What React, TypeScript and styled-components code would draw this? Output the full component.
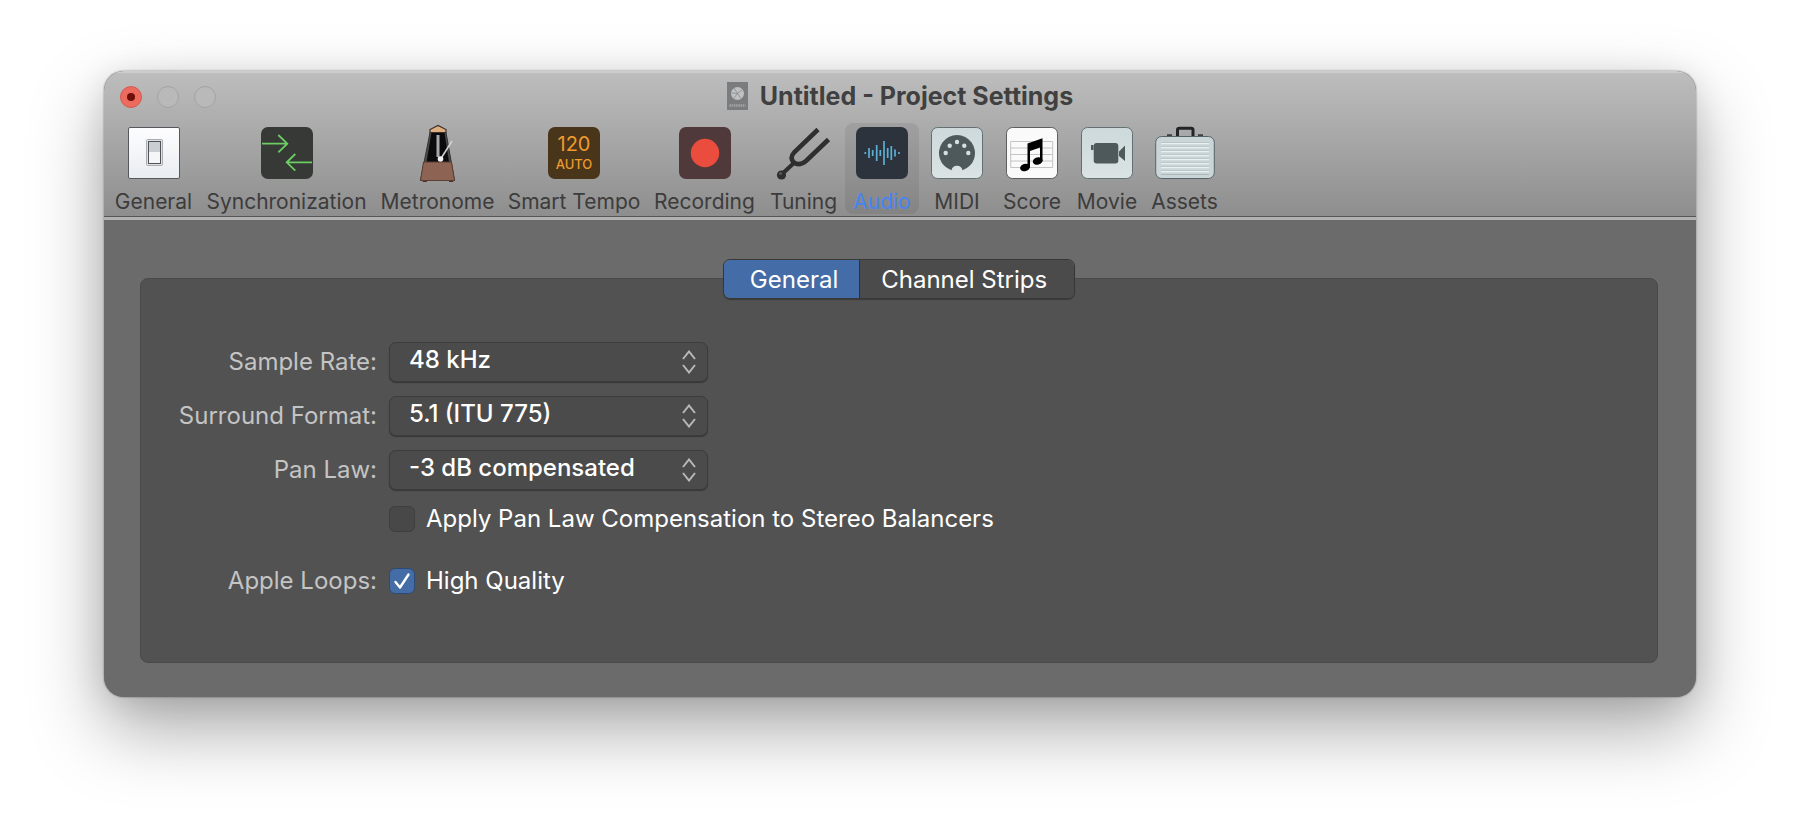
import React, { useState } from "react";
import styled, { createGlobalStyle } from "styled-components";

const GlobalStyle = createGlobalStyle`
  * { box-sizing: border-box; }
  body {
    margin: 0;
    background: #fff;
    font-family: Inter, "Liberation Sans", sans-serif;
  }
  button, select, input { font: inherit; color: inherit; margin: 0; }
`;

const Page = styled.main`
  padding: 71px 104px 138px;
`;

const Window = styled.section`
  border-radius: 20px;
  background: #6b6b6b;
  overflow: hidden;
  box-shadow: 0 0 2px rgba(0, 0, 0, 0.5), 0 32px 72px rgba(0, 0, 0, 0.34), 0 4px 32px rgba(0, 0, 0, 0.1);
`;

const Header = styled.header`
  background: linear-gradient(#bdbdbd, #8e8e8e);
  border-top: 2px solid #cdcdcd;
  border-bottom: 1px solid #565656;
`;

const TitleBar = styled.div`
  display: grid;
  grid-template-columns: 1fr auto 1fr;
  align-items: center;
  height: 48px;
  padding: 0 16px;
`;

const Lights = styled.div`
  display: flex;
  gap: 15px;
`;

const Light = styled.button<{ $close?: boolean }>`
  display: grid;
  place-items: center;
  width: 22px;
  height: 22px;
  padding: 0;
  border-radius: 50%;
  border: 1px solid ${(p) => (p.$close ? "#d8594f" : "#a3a3a3")};
  background: ${(p) => (p.$close ? "#ec6a5e" : "#b9b9b9")};
  &::after {
    content: "";
    width: 8px;
    height: 8px;
    border-radius: 50%;
    background: ${(p) => (p.$close ? "#6e0f08" : "transparent")};
  }
`;

const Title = styled.h1`
  display: flex;
  align-items: center;
  gap: 12px;
  margin: 0;
  padding-bottom: 2px;
  font-size: 25px;
  line-height: 32px;
  font-weight: 700;
  color: #404040;
`;

const Toolbar = styled.nav`
  display: flex;
  gap: 1px;
  padding: 2px 4px;
`;

const ToolButton = styled.button<{ $active?: boolean; $width: number }>`
  display: flex;
  flex: 0 0 ${(p) => p.$width}px;
  flex-direction: column;
  align-items: center;
  gap: 7px;
  padding: 0;
  border: 0;
  border-radius: 8px;
  background: ${(p) => (p.$active ? "rgba(0, 0, 0, 0.07)" : "transparent")};
  color: ${(p) => (p.$active ? "#4585f5" : "#3c3c3c")};
  font-size: 21px;
  line-height: 24px;
  white-space: nowrap;
  svg { display: block; }
`;

const Body = styled.div`
  border-top: 3px solid #b2b2b2;
  padding: 39px 38px 34px 36px;
`;

const Tabs = styled.div`
  position: relative;
  display: flex;
  width: max-content;
  margin: 0 auto -21px;
  border: 1px solid #383838;
  border-radius: 7px;
  overflow: hidden;
  box-shadow: 0 1px 1px rgba(0, 0, 0, 0.3);
`;

const Tab = styled.button<{ $active: boolean }>`
  height: 38px;
  padding: 0 21px;
  border: 0;
  background: ${(p) => (p.$active ? "#446ca6" : "#4b4b4b")};
  color: #fff;
  font-size: 24px;
  &:first-child { padding-left: 26px; }
  &:last-child { padding-right: 27px; }
  & + & { border-left: 1px solid #303030; }
`;

const Panel = styled.div`
  display: flex;
  flex-direction: column;
  padding: 63px 37px 70px;
  border: 1px solid #4a4a4a;
  border-radius: 8px;
  background: #525252;
`;

const Row = styled.div<{ $height: number; $gap: number }>`
  display: grid;
  grid-template-columns: 199px 1fr;
  column-gap: 12px;
  align-items: center;
  height: ${(p) => p.$height}px;
  margin-bottom: ${(p) => p.$gap}px;
`;

const Caption = styled.label`
  justify-self: end;
  color: #c4c4c4;
  font-size: 24px;
  line-height: 30px;
  white-space: nowrap;
`;

const SelectBox = styled.div`
  display: grid;
  width: 319px;
  align-items: center;
  & > * { grid-area: 1 / 1; }
  svg { justify-self: end; margin-right: 12px; pointer-events: none; }
`;

const Select = styled.select`
  appearance: none;
  width: 100%;
  height: 40px;
  padding: 0 40px 6px 19px;
  border: 1px solid #3c3c3c;
  border-radius: 7px;
  background: #4b4b4b;
  box-shadow: 0 1px 1px rgba(0, 0, 0, 0.35);
  color: #fff;
  font-size: 24px;
  font-weight: 500;
`;

const CheckLabel = styled.label`
  grid-column: 2;
  display: flex;
  align-items: center;
  gap: 11px;
  color: #fff;
  font-size: 24px;
  line-height: 30px;
`;

const CheckBox = styled.span`
  display: grid;
  width: 26px;
  height: 26px;
  & > * { grid-area: 1 / 1; }
  svg { pointer-events: none; }
`;

const CheckInput = styled.input`
  appearance: none;
  width: 26px;
  height: 26px;
  border: 1px solid #3e3e3e;
  border-radius: 6px;
  background: #484848;
  &:checked {
    background: #446ca6;
    border-color: #2f4a75;
  }
`;

const Icon = ({ children }: { children: React.ReactNode }) => (
  <svg width="60" height="60" viewBox="0 0 60 60" aria-hidden="true">
    {children}
  </svg>
);

const SwitchIcon = () => (
  <Icon>
    <defs>
      <linearGradient id="plate" x1="0" y1="0" x2="0" y2="1">
        <stop offset="0" stopColor="#fdfdfe" />
        <stop offset="1" stopColor="#e9edf1" />
      </linearGradient>
    </defs>
    <rect x="4.5" y="4.5" width="51" height="51" rx="1.5" fill="url(#plate)" stroke="#55585c" />
    <rect x="22.5" y="16.5" width="16" height="26" rx="1" fill="#dfe2e5" stroke="#a9adb1" />
    <rect x="24.5" y="18.5" width="12" height="22" fill="#f4f6f8" stroke="#4f5357" />
    <rect x="25" y="19" width="11" height="10" fill="#c9ced3" />
  </Icon>
);

const SyncIcon = () => (
  <Icon>
    <rect x="4" y="4" width="52" height="52" rx="7" fill="#363936" />
    <path
      d="M5 20.7H30M21.3 12L30.3 20.7L21.3 29.3M55 39.3H30M38.3 31L29.7 39.3L38.3 47.6"
      fill="none"
      stroke="#6bcd62"
      strokeWidth="1.8"
    />
  </Icon>
);

const MetronomeIcon = () => (
  <Icon>
    <path d="M14 57h5v2h-4zM41 57h5l-1 2h-4z" fill="#4b302a" />
    <path d="M22 9.5H38L46.5 57.5H12.5Z" fill="#4b4b4d" stroke="#333" />
    <path d="M23.5 9.5H36.5L41 39H18.5Z" fill="#0b0b0d" />
    <path d="M15.5 39H43.5L46.5 57.5H12.5Z" fill="#8d6353" stroke="#5a3d33" />
    <path d="M22 9.5V6.5L30 2.5L38 6.5V9.5Z" fill="#dcae80" stroke="#3a302a" strokeWidth="1.2" />
    <path d="M30 12V34" stroke="#a9a9a9" strokeWidth="3" />
    <path d="M32 37L44 18" stroke="#d4d4d4" strokeWidth="1.5" />
    <circle cx="32.5" cy="36" r="2.8" fill="#f0f0f0" />
  </Icon>
);

const TempoIcon = () => (
  <Icon>
    <rect x="4" y="4" width="52" height="52" rx="7" fill="#48351a" />
    <text x="30" y="28" textAnchor="middle" fontSize="20" fill="#ef9a2e">120</text>
    <text x="30" y="46" textAnchor="middle" fontSize="13" fontWeight="500" fill="#ef9a2e">AUTO</text>
  </Icon>
);

const RecordIcon = () => (
  <Icon>
    <rect x="4" y="4" width="52" height="52" rx="7" fill="#4f393b" />
    <circle cx="30" cy="30" r="14.2" fill="#ea4d3d" />
  </Icon>
);

const ForkIcon = () => (
  <Icon>
    <path d="M21 39L7 52" stroke="#2f2f30" strokeWidth="4" />
    <path
      d="M44 6.5L20.5 29Q15 35 20 39.5Q25 43.5 32 38L54.5 16.5"
      fill="none"
      stroke="#2f2f30"
      strokeWidth="4.6"
    />
    <circle cx="7.5" cy="52" r="4.6" fill="#2f2f30" />
    <circle cx="6.5" cy="50.5" r="1.5" fill="#5a5a5b" />
  </Icon>
);

const waveBars: [number, number][] = [
  [13.3, 1], [17, 5], [20.7, 3], [24.7, 8], [28.3, 3],
  [32, 12], [35.7, 5], [39.3, 7], [43, 3.5], [47, 1],
];

const WaveIcon = () => (
  <Icon>
    <rect x="4" y="4" width="52" height="52" rx="7" fill="#2c333d" />
    {waveBars.map(([x, half]) => (
      <path key={x} d={`M${x} ${30 - half}V${30 + half}`} stroke="#5cb0d4" strokeWidth="1.7" />
    ))}
  </Icon>
);

const Plate = () => (
  <>
    <defs>
      <linearGradient id="pale" x1="0" y1="0" x2="0" y2="1">
        <stop offset="0" stopColor="#cdd9db" />
        <stop offset="1" stopColor="#dbe3e4" />
      </linearGradient>
    </defs>
    <rect x="4.5" y="4.5" width="51" height="51" rx="6" fill="url(#pale)" stroke="#626f73" />
  </>
);

const MidiIcon = () => (
  <Icon>
    <Plate />
    <path d="M24.5 47.2A18 18 0 1 1 35.5 47.2A5.6 5.6 0 0 0 24.5 47.2Z" fill="#4e595b" />
    {[[18.7, 30], [22.7, 22.7], [30, 19], [37.3, 22.7], [41.3, 30]].map(([x, y]) => (
      <circle key={x} cx={x} cy={y} r="2.2" fill="#d6e0e2" />
    ))}
  </Icon>
);

const ScoreIcon = () => (
  <Icon>
    <rect x="4.5" y="4.5" width="51" height="51" rx="6" fill="#fafafa" stroke="#5d5d5d" />
    <path
      d="M8.7 18.5H50.7M8.7 25H50.7M8.7 31.5H50.7M8.7 38H50.7M8.7 44.5H50.7M8.7 18.5V44.5M50.7 18.5V44.5"
      stroke="#c4c4c4"
      strokeWidth="1"
    />
    <path d="M25.5 20.5L40.5 15.2V38H38V24.5L28 28V44.5H25.5Z" fill="#000" />
    <ellipse cx="23" cy="44.5" rx="5" ry="3.7" transform="rotate(-15 23 44.5)" />
    <ellipse cx="35.7" cy="38" rx="5" ry="3.7" transform="rotate(-15 35.7 38)" />
  </Icon>
);

const MovieIcon = () => (
  <Icon>
    <Plate />
    <rect x="16.7" y="20" width="24.6" height="20.5" rx="3" fill="#4e595b" />
    <path d="M42 28.5L48 22.5V38L42 33ZM14 22h2.5v5H14z" fill="#4e595b" />
  </Icon>
);

const CaseIcon = () => (
  <Icon>
    <path d="M22.5 14V7Q22.5 5.3 24.5 5.3H36Q38 5.3 38 7V14" fill="none" stroke="#222527" strokeWidth="3" />
    <path d="M12 12.5h5M43 12.5h5" stroke="#3a3f42" strokeWidth="2.5" />
    <rect x="0.7" y="13.5" width="58.6" height="42" rx="6" fill="#c9d5d7" stroke="#56646a" />
    {[19, 23, 27, 31, 35, 39, 43, 47, 51].map((y) => (
      <path key={y} d={`M6 ${y}.5H54`} stroke="#abb8bb" strokeWidth="1" />
    ))}
    {[20, 24, 28, 32, 36, 40, 44, 48].map((y) => (
      <path key={y} d={`M6 ${y}.5H54`} stroke="#e8f0f1" strokeWidth="1.5" />
    ))}
  </Icon>
);

const DocumentIcon = () => (
  <svg width="21" height="28" viewBox="0 0 21 28" aria-hidden="true">
    <rect width="21" height="28" fill="#7b7c7d" />
    <circle cx="10.5" cy="11.5" r="6.5" fill="#c0c1c2" />
    <path
      d="M10.5 11.5L7 6M10.5 11.5L15 8M10.5 11.5L14 16.5M10.5 11.5L7 16M10.5 11.5L4.5 11"
      stroke="#8f9091"
      strokeWidth="0.9"
    />
    <path d="M2.5 23.5H18.5" stroke="#a3a4a5" strokeWidth="2.5" strokeDasharray="1.5 0.7" />
  </svg>
);

const Chevrons = () => (
  <svg width="14" height="24" viewBox="0 0 14 24" fill="none" stroke="#b8b8b8" strokeWidth="2" aria-hidden="true">
    <path d="M1 9L7 1.5L13 9M1 15L7 22.5L13 15" />
  </svg>
);

const tools = [
  { name: "General", width: 91, icon: <SwitchIcon /> },
  { name: "Synchronization", width: 173, icon: <SyncIcon /> },
  { name: "Metronome", width: 127, icon: <MetronomeIcon /> },
  { name: "Smart Tempo", width: 144, icon: <TempoIcon /> },
  { name: "Recording", width: 115, icon: <RecordIcon /> },
  { name: "Tuning", width: 81, icon: <ForkIcon /> },
  { name: "Audio", width: 74, icon: <WaveIcon /> },
  { name: "MIDI", width: 74, icon: <MidiIcon /> },
  { name: "Score", width: 74, icon: <ScoreIcon /> },
  { name: "Movie", width: 74, icon: <MovieIcon /> },
  { name: "Assets", width: 79, icon: <CaseIcon /> },
];

const fields = [
  { id: "rate", label: "Sample Rate:", options: ["48 kHz", "44.1 kHz", "96 kHz"] },
  { id: "surround", label: "Surround Format:", options: ["5.1 (ITU 775)", "7.1 (SDDS)", "Quad"] },
  { id: "pan", label: "Pan Law:", options: ["-3 dB compensated", "-3 dB", "0 dB"] },
];

type CheckProps = { id: string; text: string; initial: boolean };

const Check = ({ id, text, initial }: CheckProps) => {
  const [checked, setChecked] = useState(initial);
  return (
    <CheckLabel htmlFor={id}>
      <CheckBox>
        <CheckInput id={id} type="checkbox" checked={checked} onChange={(e) => setChecked(e.target.checked)} />
        {checked && (
          <svg width="26" height="26" viewBox="0 0 26 26" aria-hidden="true">
            <path
              d="M6.5 14L11 19.5L19.5 6.5"
              fill="none"
              stroke="#fff"
              strokeWidth="2.4"
              strokeLinecap="round"
              strokeLinejoin="round"
            />
          </svg>
        )}
      </CheckBox>
      {text}
    </CheckLabel>
  );
};

export default function App() {
  const [tool, setTool] = useState("Audio");
  const [tab, setTab] = useState("General");
  return (
    <Page>
      <GlobalStyle />
      <Window>
        <Header>
          <TitleBar>
            <Lights>
              <Light $close aria-label="Close" />
              <Light aria-label="Minimize" />
              <Light aria-label="Zoom" />
            </Lights>
            <Title>
              <DocumentIcon />
              Untitled - Project Settings
            </Title>
          </TitleBar>
          <Toolbar>
            {tools.map((t) => (
              <ToolButton key={t.name} $width={t.width} $active={t.name === tool} onClick={() => setTool(t.name)}>
                {t.icon}
                {t.name}
              </ToolButton>
            ))}
          </Toolbar>
        </Header>
        <Body>
          <Tabs>
            {["General", "Channel Strips"].map((name) => (
              <Tab key={name} $active={name === tab} onClick={() => setTab(name)}>
                {name}
              </Tab>
            ))}
          </Tabs>
          <Panel>
            {fields.map((f) => (
              <Row key={f.id} $height={40} $gap={14}>
                <Caption htmlFor={f.id}>{f.label}</Caption>
                <SelectBox>
                  <Select id={f.id}>
                    {f.options.map((o) => (
                      <option key={o}>{o}</option>
                    ))}
                  </Select>
                  <Chevrons />
                </SelectBox>
              </Row>
            ))}
            <Row $height={26} $gap={36}>
              <Check id="balancers" text="Apply Pan Law Compensation to Stereo Balancers" initial={false} />
            </Row>
            <Row $height={26} $gap={0}>
              <Caption htmlFor="loops">Apple Loops:</Caption>
              <Check id="loops" text="High Quality" initial />
            </Row>
          </Panel>
        </Body>
      </Window>
    </Page>
  );
}
